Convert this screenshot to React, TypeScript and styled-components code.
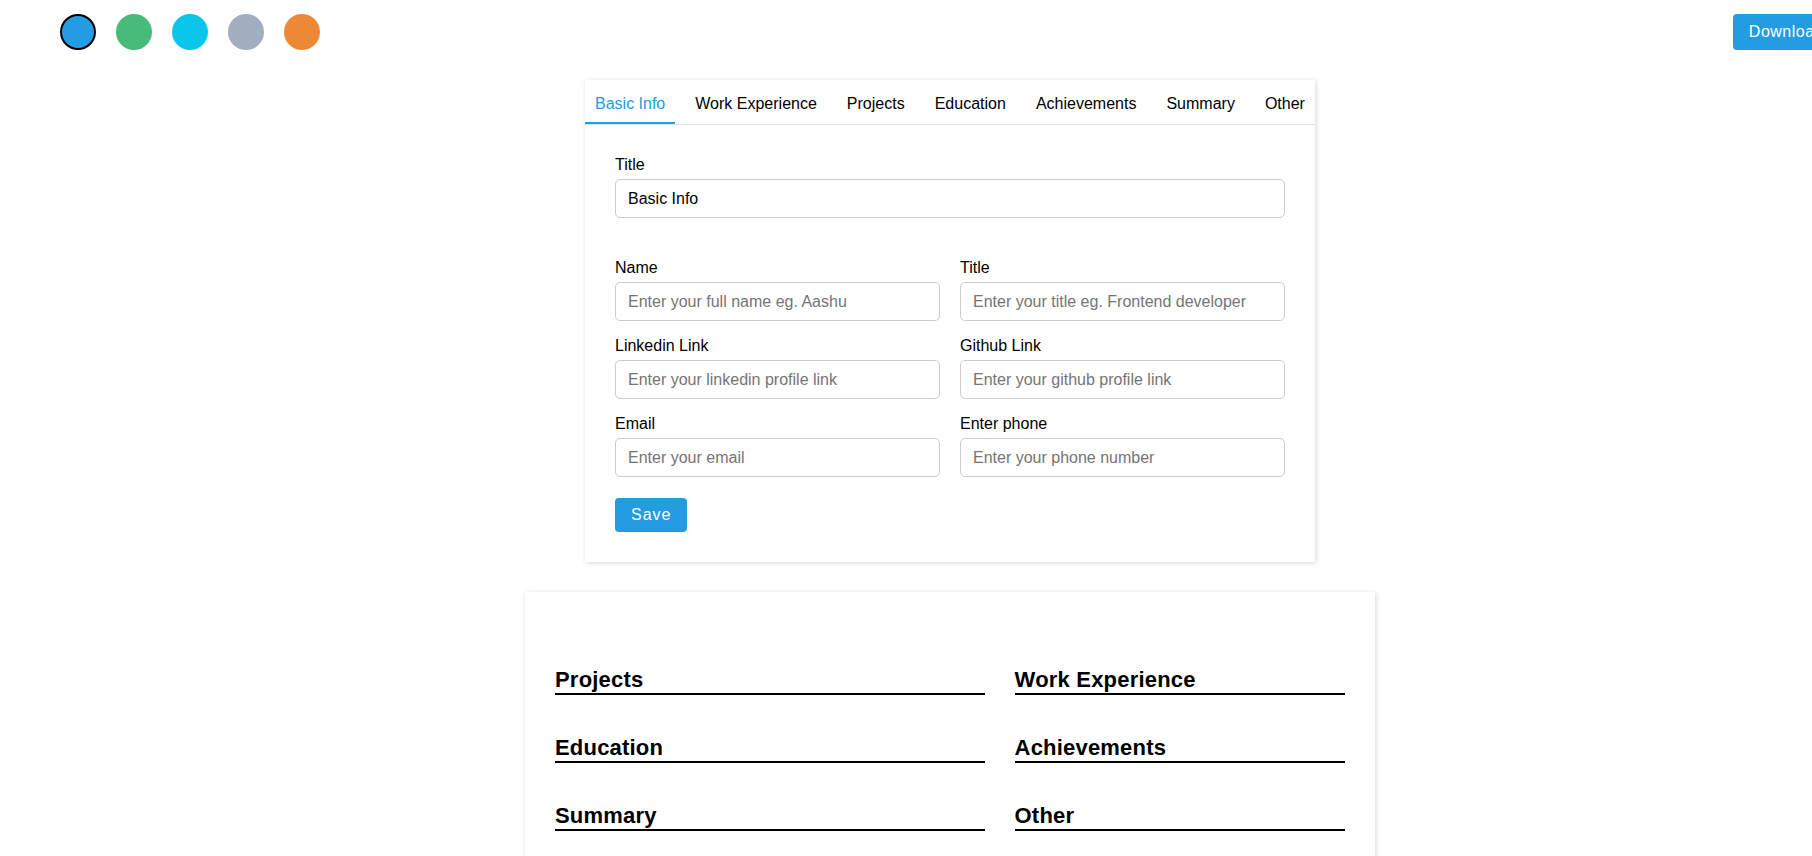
import React from "react";
import styled, { createGlobalStyle } from "styled-components";

const GlobalStyle = createGlobalStyle`
  html, body {
    margin: 0;
    padding: 0;
    overflow: hidden;
    background: #ffffff;
  }
  body {
    font-family: "Liberation Sans", Arial, sans-serif;
    color: #000;
  }
  * { box-sizing: border-box; }
`;

const Page = styled.div`
  width: 1900px;
  display: flex;
  flex-direction: column;
`;

const TopBar = styled.header`
  display: flex;
  align-items: center;
  justify-content: space-between;
  padding: 14px 60px 0;
`;

const Swatches = styled.div`
  display: flex;
  gap: 20px;
`;

const Swatch = styled.button<{ $color: string; $active?: boolean }>`
  width: 36px;
  height: 36px;
  border-radius: 50%;
  padding: 0;
  background: ${(p) => p.$color};
  border: ${(p) => (p.$active ? "2px solid #000" : "none")};
  cursor: pointer;
`;

const PrimaryButton = styled.button<{ $height?: number; $spacing?: number }>`
  height: ${(p) => p.$height ?? 34}px;
  padding: 0 16px;
  border: none;
  border-radius: 4px;
  background: #239ce2;
  color: #fff;
  font-family: "Liberation Sans", Arial, sans-serif;
  font-size: 16px;
  letter-spacing: ${(p) => p.$spacing ?? 1}px;
  cursor: pointer;
`;

const Main = styled.main`
  display: flex;
  flex-direction: column;
  align-items: center;
  gap: 30px;
  padding-top: 30px;
`;

const EditorCard = styled.section`
  width: 730px;
  background: #fff;
  box-shadow: 1px 1px 5px rgba(0, 0, 0, 0.16);
`;

const Tabs = styled.nav`
  display: flex;
  justify-content: space-between;
  border-bottom: 1px solid #e3e3e3;
`;

const Tab = styled.div<{ $active?: boolean }>`
  padding: 15px 10px 9px;
  font-size: 16px;
  line-height: 18px;
  white-space: nowrap;
  color: ${(p) => (p.$active ? "#239ce2" : "#000")};
  border-bottom: 2px solid ${(p) => (p.$active ? "#239ce2" : "transparent")};
  cursor: pointer;
`;

const Body = styled.div`
  padding: 30px;
  display: flex;
  flex-direction: column;
`;

const Field = styled.div`
  display: flex;
  flex-direction: column;
`;

const TitleField = styled(Field)`
  margin-bottom: 40px;
`;

const Label = styled.label`
  display: block;
  font-size: 16px;
  line-height: 20px;
  margin-bottom: 4px;
`;

const Input = styled.input`
  height: 39px;
  width: 100%;
  border: 1px solid #cccccc;
  border-radius: 5px;
  padding: 0 12px;
  font-family: "Liberation Sans", Arial, sans-serif;
  font-size: 16px;
  color: #000;
  outline: none;
  &::placeholder {
    color: #757575;
  }
`;

const FormGrid = styled.div`
  display: grid;
  grid-template-columns: 1fr 1fr;
  column-gap: 20px;
  row-gap: 15px;
`;

const SaveRow = styled.div`
  margin-top: 21px;
  display: flex;
`;

const ResumeCard = styled.section`
  width: 850px;
  min-height: 1100px;
  padding: 30px;
  background: #fff;
  box-shadow: 1px 1px 5px rgba(0, 0, 0, 0.16);
`;

const ResumeHeader = styled.div`
  height: 44px;
`;

const ResumeGrid = styled.div`
  display: grid;
  grid-template-columns: 1.3fr 1fr;
  column-gap: 30px;
  row-gap: 39px;
`;

const SectionTitle = styled.h3`
  margin: 0;
  font-size: 22px;
  line-height: 27px;
  font-weight: 700;
  letter-spacing: 0.2px;
  padding-bottom: 0;
  border-bottom: 2px solid #000;
`;

const colors = ["#239ce2", "#48bb78", "#0bc5ea", "#a0aec0", "#ed8936"];
const tabs = [
  "Basic Info",
  "Work Experience",
  "Projects",
  "Education",
  "Achievements",
  "Summary",
  "Other",
];

const fields = [
  { label: "Name", placeholder: "Enter your full name eg. Aashu" },
  { label: "Title", placeholder: "Enter your title eg. Frontend developer" },
  { label: "Linkedin Link", placeholder: "Enter your linkedin profile link" },
  { label: "Github Link", placeholder: "Enter your github profile link" },
  { label: "Email", placeholder: "Enter your email" },
  { label: "Enter phone", placeholder: "Enter your phone number" },
];

const sections = [
  "Projects",
  "Work Experience",
  "Education",
  "Achievements",
  "Summary",
  "Other",
];

export default function App() {
  return (
    <>
      <GlobalStyle />
      <Page>
        <TopBar>
          <Swatches>
            {colors.map((c, i) => (
              <Swatch key={c} $color={c} $active={i === 0} aria-label={c} />
            ))}
          </Swatches>
          <PrimaryButton $height={36} $spacing={0.5}>
            Download
          </PrimaryButton>
        </TopBar>
        <Main>
          <EditorCard>
            <Tabs>
              {tabs.map((t, i) => (
                <Tab key={t} $active={i === 0}>
                  {t}
                </Tab>
              ))}
            </Tabs>
            <Body>
              <TitleField>
                <Label>Title</Label>
                <Input defaultValue="Basic Info" />
              </TitleField>
              <FormGrid>
                {fields.map((f) => (
                  <Field key={f.label}>
                    <Label>{f.label}</Label>
                    <Input placeholder={f.placeholder} />
                  </Field>
                ))}
              </FormGrid>
              <SaveRow>
                <PrimaryButton>Save</PrimaryButton>
              </SaveRow>
            </Body>
          </EditorCard>
          <ResumeCard>
            <ResumeHeader />
            <ResumeGrid>
              {sections.map((s) => (
                <SectionTitle key={s}>{s}</SectionTitle>
              ))}
            </ResumeGrid>
          </ResumeCard>
        </Main>
      </Page>
    </>
  );
}
